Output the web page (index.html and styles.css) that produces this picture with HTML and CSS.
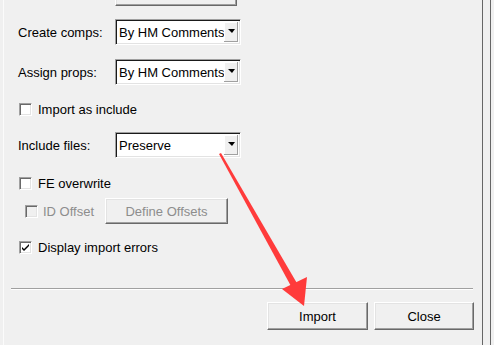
FILE: index.html
```html
<!DOCTYPE html>
<html lang="en">
<head>
    <meta charset="UTF-8">
    <meta name="viewport" content="width=device-width, initial-scale=1.0">
    <title>Import options</title>
    <link rel="stylesheet" href="styles.css">
</head>
<body>
    <div class="panel">
        <div class="form">
            <div class="top-row">
                <button class="btn btn-cut"></button>
            </div>
            <div class="field field-first">
                <label class="field-label">Create comps:</label>
                <div class="combo"><span class="combo-text">By HM Comments</span><span class="combo-btn"><i class="arrow"></i></span></div>
            </div>
            <div class="field">
                <label class="field-label">Assign props:</label>
                <div class="combo"><span class="combo-text">By HM Comments</span><span class="combo-btn"><i class="arrow"></i></span></div>
            </div>
            <div class="check-row check-include">
                <span class="check"></span>
                <span>Import as include</span>
            </div>
            <div class="field field-files">
                <label class="field-label">Include files:</label>
                <div class="combo"><span class="combo-text">Preserve</span><span class="combo-btn"><i class="arrow"></i></span></div>
            </div>
            <div class="check-row check-fe">
                <span class="check"></span>
                <span>FE overwrite</span>
            </div>
            <div class="offset-row">
                <span class="check check-disabled"></span>
                <span class="disabled-text">ID Offset</span>
                <button class="btn btn-offsets" disabled>Define Offsets</button>
            </div>
            <div class="check-row check-errors">
                <span class="check">
                    <svg width="11" height="11" viewBox="0 0 11 11"><path d="M2 5 L4 7 L9 2 L9 4 L4 9 L2 7 Z" fill="#000"/></svg>
                </span>
                <span>Display import errors</span>
            </div>
        </div>
        <div class="separator"></div>
        <div class="actions">
            <button class="btn btn-import">Import</button>
            <button class="btn btn-close">Close</button>
        </div>
    </div>
    <div class="edge"></div>

    <!-- red annotation arrow drawn over the dialog -->
    <svg class="annotation" width="494" height="345" viewBox="0 0 494 345">
        <polygon points="219,154 221,153 298,285 292,288" fill="#ff3b3b"/>
        <polygon points="304,306 282,289 307,277" fill="#ff3b3b"/>
    </svg>
</body>
</html>
```

FILE: styles.css
```css
body {
    margin: 0;
    width: 494px;
    height: 345px;
    overflow: hidden;
    background-color: #f0f0f0;
    font-family: 'Liberation Sans', Arial, sans-serif;
    font-size: 13px;
    color: #000;
    display: flex;
    position: relative;
}
.panel {
    margin-left: 3px;
    width: 478px;
    border-left: 1px solid #fbfbfb;
    display: flex;
    flex-direction: column;
}
.edge {
    width: 7px;
    border-left: 1px solid #666;
    border-right: 1px solid #666;
}
.form {
    padding-left: 14px;
}
.top-row {
    height: 6px;
    display: flex;
    align-items: flex-end;
}
.btn {
    font-family: inherit;
    font-size: 13px;
    color: #000;
    background-color: #f0f0f0;
    box-sizing: border-box;
    border: 1px solid;
    border-color: #fff #696969 #696969 #fff;
    box-shadow: inset -1px -1px #a0a0a0, inset 1px 1px #e3e3e3;
    padding: 0;
}
.btn-cut {
    flex-shrink: 0;
    margin-left: 97px;
    width: 122px;
    height: 26px;
}
.field {
    display: flex;
    align-items: center;
    height: 26px;
    margin-top: 14px;
}
.field-first {
    margin-top: 13px;
}
.field-files {
    margin-top: 14px;
}
.field-label {
    width: 97px;
}
.combo {
    width: 126px;
    height: 26px;
    box-sizing: border-box;
    border: 1px solid;
    border-color: #a0a0a0 #fff #fff #a0a0a0;
    box-shadow: inset 1px 1px #1a1a1a, inset -1px -1px #e3e3e3;
    background-color: #fff;
    display: flex;
    align-items: center;
    padding: 2px 2px 2px 3px;
}
.combo-text {
    flex: 1;
    white-space: nowrap;
    overflow: hidden;
}
.combo-btn {
    width: 14px;
    height: 100%;
    box-sizing: border-box;
    background-color: #f0f0f0;
    box-shadow: inset -1px -1px #a0a0a0, inset 1px 1px #fff;
    display: flex;
    align-items: center;
    justify-content: center;
    padding-bottom: 3px;
}
.arrow {
    width: 0;
    height: 0;
    border-left: 4px solid transparent;
    border-right: 3px solid transparent;
    border-top: 4px solid #000;
}
.check-row {
    display: flex;
    align-items: center;
    height: 18px;
    padding-left: 1px;
    gap: 6px;
}
.check-include {
    margin-top: 15px;
}
.check-fe {
    margin-top: 16px;
}
.check-errors {
    margin-top: 14px;
}
.check {
    width: 13px;
    height: 13px;
    box-sizing: border-box;
    border: 1px solid;
    border-color: #a0a0a0 #fff #fff #a0a0a0;
    box-shadow: inset 1px 1px #696969, inset -1px -1px #e3e3e3;
    background-color: #fff;
    display: flex;
    align-items: center;
    justify-content: center;
}
.check svg {
    display: block;
}
.check-disabled {
    background-color: #f0f0f0;
    margin-left: 7px;
    margin-right: 5px;
}
.offset-row {
    display: flex;
    align-items: center;
    height: 26px;
    margin-top: 6px;
}
.disabled-text {
    color: #8d8d8d;
}
.btn-offsets {
    margin-left: 11px;
    width: 123px;
    height: 26px;
    color: #8d8d8d;
}
.separator {
    margin: 32px 0 0 7px;
    width: 462px;
    border-top: 1px solid #a0a0a0;
    border-bottom: 1px solid #fff;
}
.actions {
    display: flex;
    justify-content: flex-end;
    gap: 6px;
    padding-right: 8px;
    margin-top: 12px;
}
.btn-import {
    width: 101px;
    height: 28px;
}
.btn-close {
    width: 100px;
    height: 28px;
}
.annotation {
    position: absolute;
    left: 0;
    top: 0;
    pointer-events: none;
}
```
